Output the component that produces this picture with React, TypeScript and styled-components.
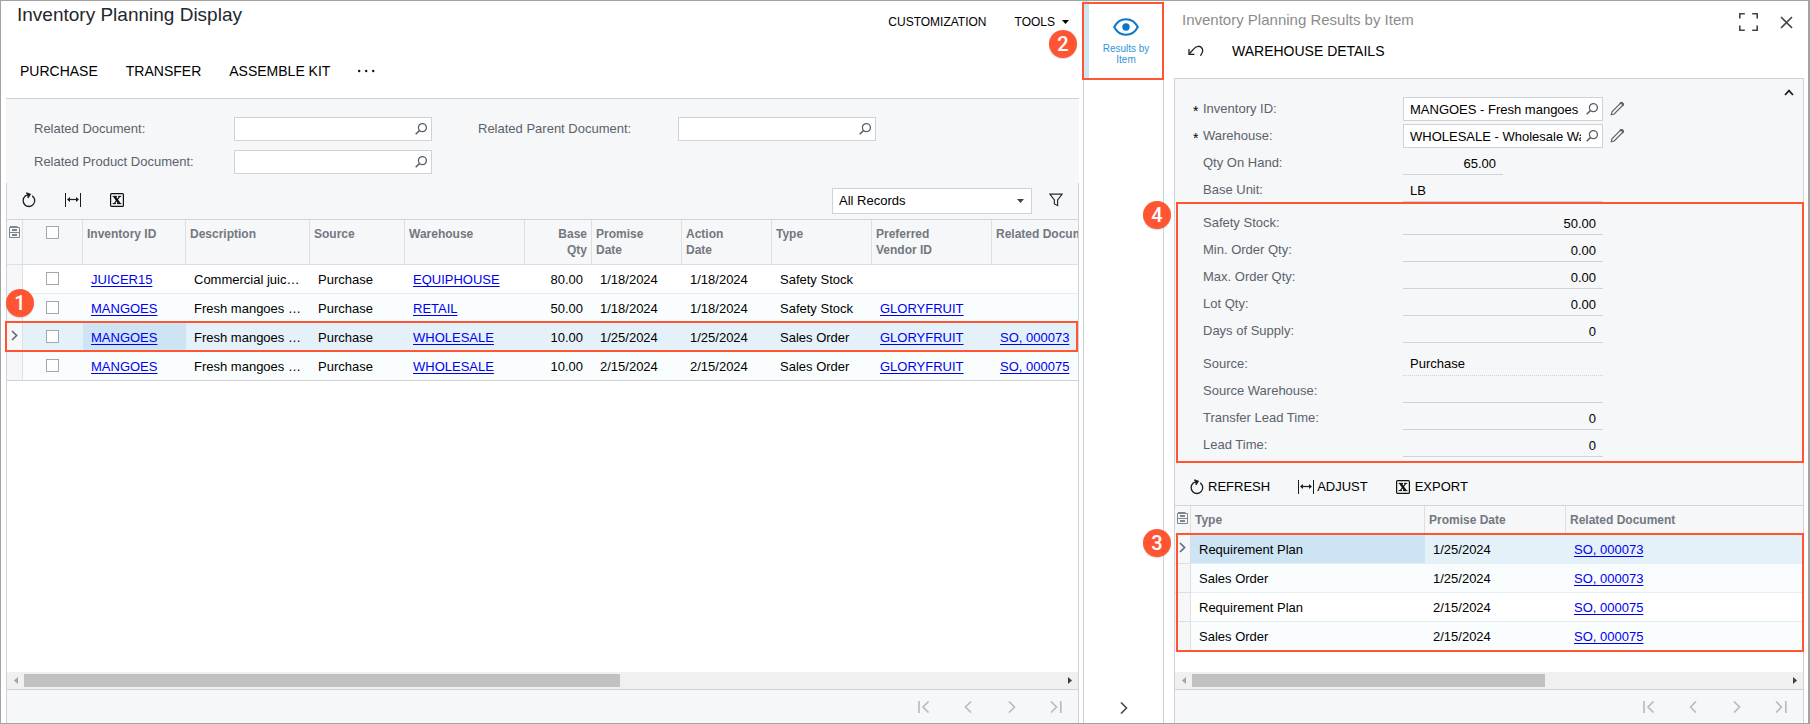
import React from "react";
import styled, { createGlobalStyle, css } from "styled-components";

const color = {
  line: "#cfd2d7",
  headLine: "#dddfe5",
  rowLine: "#e4eff2",
  panel: "#f5f7f9",
  alt: "#f9fdfd",
  selected: "#e4f1f9",
  active: "#cce4f4",
  label: "#5c626b",
  muted: "#8c8c8c",
  head: "#737880",
  link: "#0000ee",
  accent: "#ff5533",
  frame: "#a3a3a3",
  blue: "#0a78c9",
};

const GlobalStyle = createGlobalStyle`
  *, *::before, *::after { box-sizing: border-box; }
  body {
    margin: 0;
    background: #fff;
    color: #000;
    font-family: "Liberation Sans", Arial, sans-serif;
    font-size: 13px;
    line-height: 18px;
  }
  button, input, select { font: inherit; color: inherit; }
`;

/* ---------- shell ---------- */

const Frame = styled.div`
  display: grid;
  grid-template-columns: minmax(0, 1fr) 81px 644px;
  min-height: 100vh;
  border: 1px solid ${color.frame};
  border-right-width: 2px;
`;

const MainPane = styled.main`
  display: flex;
  flex-direction: column;
  min-width: 0;
  padding: 0 4px 0 5px;
`;

const SidePane = styled.section`
  display: flex;
  flex-direction: column;
  min-width: 0;
  padding: 0 4px 0 10px;
`;

const Rail = styled.aside`
  display: flex;
  flex-direction: column;
  justify-content: space-between;
  border: solid ${color.line};
  border-width: 0 1px;
`;

const PlainButton = styled.button`
  display: inline-flex;
  align-items: center;
  justify-content: center;
  padding: 0;
  border: 0;
  background: none;
  cursor: pointer;
  white-space: nowrap;
`;

const IconButton = styled(PlainButton)<{ $w?: number; $h?: number }>`
  flex: none;
  width: ${(p) => p.$w ?? 24}px;
  height: ${(p) => p.$h ?? 24}px;
`;

/* ---------- headings and menus ---------- */

const PageHead = styled.header`
  display: flex;
  justify-content: space-between;
  align-items: flex-start;
  height: 43px;
  padding: 3px 10px 0 11px;
`;

const PageTitle = styled.h1`
  margin: 0;
  font-size: 19px;
  font-weight: 400;
  line-height: 22px;
  color: #23272f;
`;

const PageTools = styled.div`
  display: flex;
  gap: 28px;
  padding-top: 10px;
  font-size: 12px;
  line-height: 16px;
`;

const ToolsButton = styled(PlainButton)`
  gap: 7px;
`;

const ActionBar = styled.nav`
  display: flex;
  align-items: center;
  gap: 28px;
  height: 54px;
  padding-left: 14px;
  font-size: 14px;
  line-height: 20px;
`;

const SideHead = styled.header`
  display: flex;
  align-items: center;
  height: 36px;
  padding: 2px 6px 0 8px;
`;

const SideTitle = styled.h2`
  flex: 1;
  margin: 0;
  font-size: 15px;
  font-weight: 400;
  line-height: 20px;
  color: ${color.muted};
`;

const SideTools = styled.div`
  display: flex;
  gap: 14px;
  padding-top: 4px;
`;

const SideActionBar = styled.nav`
  display: flex;
  align-items: center;
  gap: 24px;
  height: 28px;
  margin-bottom: 13px;
  padding-left: 10px;
  font-size: 14px;
`;

/* ---------- main filter form ---------- */

const FilterForm = styled.form`
  display: grid;
  grid-template-columns: 200px 198px;
  grid-auto-rows: 24px;
  row-gap: 9px;
  align-items: center;
  min-width: 0;
`;

const FilterArea = styled.div`
  display: flex;
  align-items: flex-start;
  gap: 46px;
  padding: 18px 28px 9px;
  border-top: 1px solid ${color.line};
  background: ${color.panel};
`;

const Label = styled.label`
  color: ${color.label};
  white-space: nowrap;
`;

const LookupBox = styled.span`
  display: flex;
  align-items: center;
  width: 100%;
  height: 24px;
  border: 1px solid ${color.line};
  background: #fff;
`;

const LookupInput = styled.input`
  flex: 1;
  min-width: 0;
  height: 22px;
  padding: 0;
  margin: 0 1px 0 6px;
  border: 0;
  outline: 0;
  background: none;
`;

/* ---------- grid ---------- */

const GridPanel = styled.section`
  display: flex;
  flex: 1;
  flex-direction: column;
  min-width: 0;
  border: solid ${color.line};
  border-width: 0 1px;
`;

const GridToolbar = styled.div`
  display: flex;
  align-items: flex-start;
  gap: 20px;
  height: 36px;
  padding: 5px 10px 0;
  background: ${color.panel};
`;

const Spacer = styled.span`
  flex: 1;
`;

const SelectWrap = styled.span`
  display: grid;
  align-items: center;
  width: 200px;
  & > * { grid-area: 1 / 1; }
  & > svg { justify-self: end; margin-right: 8px; pointer-events: none; }
`;

const RecordSelect = styled.select`
  appearance: none;
  width: 100%;
  height: 26px;
  padding: 0 6px;
  border: 1px solid ${color.line};
  border-radius: 0;
  background: #fff;
`;

const FilterSlot = styled.span`
  display: flex;
  margin-left: -8px;
`;

const TableArea = styled.div`
  flex: 1;
  min-width: 0;
  border-top: 1px solid ${color.line};
`;

const Table = styled.table`
  width: 100%;
  table-layout: fixed;
  border-collapse: separate;
  border-spacing: 0;
`;

const HeadCell = styled.th<{ $tall?: boolean; $right?: boolean; $center?: boolean; $last?: boolean }>`
  height: ${(p) => (p.$tall ? 45 : 29)}px;
  padding: ${(p) => (p.$center ? "6px 0 0" : "6px 4px 0")};
  border-right: ${(p) => (p.$last ? "0" : `1px solid ${color.headLine}`)};
  border-bottom: 1px solid ${color.headLine};
  background: ${color.panel};
  color: ${color.head};
  font-size: 12px;
  font-weight: 700;
  line-height: 16px;
  text-align: ${(p) => (p.$center ? "center" : p.$right ? "right" : "left")};
  vertical-align: top;
  overflow: hidden;
  ${(p) => p.$last && css`white-space: nowrap; padding-right: 0;`}
`;

const Row = styled.tr<{ $alt?: boolean; $selected?: boolean; $anchor?: boolean }>`
  background: ${(p) => (p.$selected ? color.selected : p.$alt ? color.alt : "#fff")};
  ${(p) => p.$anchor && css`position: relative;`}
`;

const Body = styled.tbody<{ $anchor?: boolean }>`
  ${(p) => p.$anchor && css`position: relative;`}
`;

const Cell = styled.td<{ $right?: boolean; $active?: boolean; $end?: boolean }>`
  height: 29px;
  padding: 2px ${(p) => (p.$right ? 9 : 8)}px 0 8px;
  border-bottom: 1px solid ${(p) => (p.$end ? color.line : color.rowLine)};
  background: ${(p) => (p.$active ? color.active : "transparent")};
  text-align: ${(p) => (p.$right ? "right" : "left")};
  white-space: nowrap;
  overflow: hidden;
  text-overflow: ellipsis;
`;

const MarkCell = styled.td<{ $end?: boolean }>`
  padding: 0;
  border-right: 1px solid ${color.headLine};
  border-bottom: 1px solid ${(p) => (p.$end ? color.line : color.headLine)};
  background: ${color.panel};
  text-align: center;
  & > svg { display: block; margin: 0 auto 4px; }
`;

const CheckCell = styled.td<{ $end?: boolean }>`
  padding: 0 2px 2px 0;
  border-bottom: 1px solid ${(p) => (p.$end ? color.line : color.rowLine)};
`;

const Check = styled.input`
  appearance: none;
  display: block;
  width: 13px;
  height: 13px;
  margin: 0 auto;
  border: 1px solid #a3a7ae;
  background: #fff;
`;

const Link = styled.a`
  color: ${color.link};
  text-decoration: underline;
  text-underline-offset: 2px;
`;

/* ---------- scroll bar and pager ---------- */

const ScrollBar = styled.div`
  display: flex;
  height: 17px;
  background: #f0f0f0;
`;

const Track = styled.div`
  flex: 1;
  padding: 2px 0;
`;

const Thumb = styled.div<{ $share: number }>`
  width: ${(p) => p.$share}%;
  height: 13px;
  background: #c1c1c1;
`;

const Pager = styled.footer`
  display: flex;
  justify-content: flex-end;
  height: 34px;
  border-top: 1px solid ${color.line};
  background: ${color.panel};
  padding-top: 1px;
`;

/* ---------- rail ---------- */

const RailItem = styled.div`
  position: relative;
  height: 78px;
  border-left: 5px solid #cce6f4;
`;

const RailButton = styled.button`
  display: flex;
  flex-direction: column;
  align-items: center;
  gap: 7px;
  width: 100%;
  height: 78px;
  padding: 17px 12px 0;
  border: 0;
  background: none;
  color: #3494d6;
  font-size: 10px;
  line-height: 11px;
  cursor: pointer;
  & > svg { flex: none; }
`;

const RailFoot = styled.div`
  display: flex;
  justify-content: center;
  padding: 0 0 3px;
`;

/* ---------- detail form ---------- */

const Details = styled.form`
  border: 1px solid ${color.line};
  border-bottom: 0;
  background: ${color.panel};
`;

const SummaryRow = styled.div`
  display: flex;
  align-items: flex-start;
`;

const FieldGroup = styled.div<{ $first?: boolean }>`
  display: grid;
  flex: 1;
  gap: 3px;
  padding: ${(p) => (p.$first ? "18px 0 0" : "9px 0 0")};
`;

const FieldRow = styled.div`
  display: grid;
  grid-template-columns: 10px 200px 200px 30px;
  align-items: center;
  height: 24px;
  padding-left: 18px;
`;

const Star = styled.span`
  margin-top: 4px;
  font-size: 14px;
  line-height: 14px;
`;

const ReadOnly = styled.input<{ $short?: boolean; $right?: boolean }>`
  width: ${(p) => (p.$short ? 100 : 200)}px;
  height: 24px;
  padding: 1px 7px 0;
  border: 0;
  border-bottom: 1px solid ${color.line};
  outline: 0;
  background: none;
  text-align: ${(p) => (p.$right ? "right" : "left")};
`;

const ReadOnlySelect = styled.select`
  appearance: none;
  width: 200px;
  height: 24px;
  padding: 0 7px;
  border: 0;
  border-bottom: 1px dotted ${color.line};
  border-radius: 0;
  background: none;
  color: #000;
  opacity: 1;
`;

const Highlighted = styled.div`
  position: relative;
  padding-bottom: 6px;
`;

const DetailToolbar = styled.div`
  display: flex;
  align-items: center;
  gap: 28px;
  height: 42px;
  padding: 5px 15px 0;
  background: ${color.panel};
`;

const ToolButton = styled(PlainButton)<{ $gap: number }>`
  gap: ${(p) => p.$gap}px;
`;

/* ---------- annotations ---------- */

const Callout = styled.span<{ $inset: string }>`
  position: absolute;
  inset: ${(p) => p.$inset};
  border: 2px solid ${color.accent};
  pointer-events: none;
  z-index: 1;
`;

const Badge = styled.span<{ $left: number; $top: number }>`
  position: absolute;
  left: ${(p) => p.$left}px;
  top: ${(p) => p.$top}px;
  z-index: 2;
  display: flex;
  align-items: center;
  justify-content: center;
  width: 28px;
  height: 28px;
  border-radius: 50%;
  background: ${color.accent};
  box-shadow: 0 1px 1px rgba(0, 0, 0, 0.15);
  color: #fff;
  font-family: Roboto, "Liberation Sans", sans-serif;
  font-size: 20px;
  font-weight: 500;
  line-height: 28px;
`;

/* ---------- icons ---------- */

const SearchIcon = () => (
  <svg width="12" height="12" viewBox="0 0 12 12" fill="none" stroke="#5b5f66" strokeWidth="1.3">
    <circle cx="7.4" cy="4.6" r="4" />
    <path d="M4.5 7.5 .7 11.3" strokeWidth="1.6" />
  </svg>
);

const RefreshIcon = () => (
  <svg width="14" height="16" viewBox="0 0 14 16" fill="none" stroke="#1d1d1d" strokeWidth="1.3">
    <path d="M10.2 3.9A5.8 5.8 0 1 1 3.4 4.1" />
    <path d="M2.9 4.3Q4.6 3 6.6 2.9" />
    <path d="M4.2.8 8.2 2.4 5.9 6" />
    <path d="M4.8 1.2 7.8 2.4 6 5.2Z" fill="#1d1d1d" strokeWidth=".5" />
  </svg>
);

const AdjustIcon = () => (
  <svg width="16" height="14" viewBox="0 0 16 14" fill="none" stroke="#1d1d1d">
    <path d="M.5 0V14M15.5 0V14" strokeWidth="1" />
    <path d="M3 6.5H13" strokeWidth="1.2" />
    <path d="M2 6.5 5 4V9ZM14 6.5 11 4V9Z" fill="#1d1d1d" stroke="none" />
  </svg>
);

const ExcelIcon = () => (
  <svg width="14" height="14" viewBox="0 0 14 14" fill="none" stroke="#111">
    <rect x=".6" y=".6" width="12.8" height="12.8" rx="1" strokeWidth="1.2" />
    <path d="M4.4 3.4 9.4 10.6" strokeWidth="2.5" />
    <path d="M9.8 3.4 4.2 10.6" strokeWidth="1.1" />
    <path d="M2.6 3.4H7M8 3.4H11.2M2.6 10.6H6M7 10.6H11.4" strokeWidth="1" />
  </svg>
);

const FunnelIcon = () => (
  <svg width="14" height="14" viewBox="0 0 14 14" fill="none" stroke="#2a2d33" strokeWidth="1.2">
    <path d="M.9 1.1H13.1L8.6 6.9V12.6L5.4 11V6.9Z" />
  </svg>
);

const CaretDown = ({ fill = "#000" }: { fill?: string }) => (
  <svg width="7" height="4" viewBox="0 0 7 4">
    <path d="M0 0H7L3.5 4Z" fill={fill} />
  </svg>
);

const DotsIcon = () => (
  <svg width="17" height="4" viewBox="0 0 17 4" fill="#111">
    <circle cx="1.2" cy="2" r="1.2" />
    <circle cx="8.2" cy="2" r="1.2" />
    <circle cx="15.2" cy="2" r="1.2" />
  </svg>
);

const FilesIcon = () => (
  <svg width="11" height="12" viewBox="0 0 11 12" fill="none" stroke="#80858d">
    <path d="M1 .5H8.5" strokeWidth="1" />
    <path d="M.5 1.5H10.5V11.5H.5ZM.5 6.5H10.5" strokeWidth="1" />
    <path d="M3 4H8M3 9H8" strokeWidth="2" />
  </svg>
);

const RowMarkIcon = () => (
  <svg width="7" height="11" viewBox="0 0 7 11" fill="none" stroke="#626770" strokeWidth="1.6">
    <path d="M1 1 5.6 5.5 1 10" />
  </svg>
);

const EyeIcon = () => (
  <svg width="26" height="18" viewBox="0 0 26 18" fill="none" stroke={color.blue} strokeWidth="2">
    <path d="M1.2 9C4 3.6 8.2 1.2 13 1.2S22 3.6 24.8 9C22 14.4 17.8 16.8 13 16.8S4 14.4 1.2 9Z" />
    <circle cx="13" cy="9" r="3.7" fill={color.blue} stroke="none" />
  </svg>
);

const UndoIcon = () => (
  <svg width="16" height="12" viewBox="0 0 16 12" fill="none" stroke="#1d1d1d" strokeWidth="1.3">
    <path d="M1.4 8.8 6 3.6C8.4.6 12.6.4 14.2 3.6 15.2 6 14.4 8.6 12.4 10.8" />
    <path d="M1 4V9.3H6.4" />
  </svg>
);

const ExpandIcon = () => (
  <svg width="19" height="18" viewBox="0 0 19 18" fill="none" stroke="#444" strokeWidth="1.6">
    <path d="M.8 5.4V.8H5.8M13.2.8H18.2V5.4M18.2 12.6V17.2H13.2M5.8 17.2H.8V12.6" />
  </svg>
);

const CloseIcon = () => (
  <svg width="13" height="13" viewBox="0 0 13 13" fill="none" stroke="#444" strokeWidth="1.7">
    <path d="M1 1 12 12M12 1 1 12" />
  </svg>
);

const CollapseIcon = () => (
  <svg width="10" height="7" viewBox="0 0 10 7" fill="none" stroke="#222" strokeWidth="1.8">
    <path d="M1 6 5 1.6 9 6" />
  </svg>
);

const PencilIcon = () => (
  <svg width="14" height="14" viewBox="0 0 14 14" fill="none" stroke="#5c6067">
    <path d="M1.2 12.8 2 9.8 9.8 1.8Q11-.2 12.6 1.2T12 4L4.2 12Z" strokeWidth="1.1" />
    <path d="M10 1.8Q11.2.4 12.4 1.4T12.2 3.8" strokeWidth="2" />
  </svg>
);

const PageIcon = ({ kind, stroke = "#b9bcc1" }: { kind: "first" | "prev" | "next" | "last"; stroke?: string }) => {
  const shapes = {
    first: "M1 0V12M10.5 .5 5 6 10.5 11.5",
    prev: "M9 .5 3.5 6 9 11.5",
    next: "M3 .5 8.5 6 3 11.5",
    last: "M1 .5 6.5 6 1 11.5M10.8 0V12",
  };
  return (
    <svg width="12" height="12" viewBox="0 0 12 12" fill="none" stroke={stroke} strokeWidth="1.7">
      <path d={shapes[kind]} />
    </svg>
  );
};

const ScrollArrow = ({ dir }: { dir: "left" | "right" }) => (
  <svg width="4" height="7" viewBox="0 0 4 7">
    <path d={dir === "left" ? "M4 0V7L0 3.5Z" : "M0 0V7L4 3.5Z"} fill={dir === "left" ? "#a3a3a3" : "#404040"} />
  </svg>
);

/* ---------- composed parts ---------- */

const Lookup = ({ id, value }: { id: string; value?: string }) => (
  <LookupBox>
    <LookupInput id={id} type="text" defaultValue={value} />
    <IconButton type="button" aria-label="Select" $w={20} $h={22}>
      <SearchIcon />
    </IconButton>
  </LookupBox>
);

const HScroll = ({ share }: { share: number }) => (
  <ScrollBar>
    <IconButton type="button" aria-label="Scroll left" $w={17} $h={17}>
      <ScrollArrow dir="left" />
    </IconButton>
    <Track>
      <Thumb $share={share} />
    </Track>
    <IconButton type="button" aria-label="Scroll right" $w={17} $h={17}>
      <ScrollArrow dir="right" />
    </IconButton>
  </ScrollBar>
);

const PagerBar = () => (
  <Pager>
    {(["first", "prev", "next", "last"] as const).map((kind) => (
      <IconButton key={kind} type="button" aria-label={`${kind} page`} $w={44} $h={32}>
        <PageIcon kind={kind} />
      </IconButton>
    ))}
  </Pager>
);

interface FieldProps {
  id: string;
  label: string;
  required?: boolean;
  children: React.ReactNode;
  edit?: boolean;
}

const Field = ({ id, label, required, children, edit }: FieldProps) => (
  <FieldRow>
    {required ? <Star>*</Star> : <span />}
    <Label htmlFor={id}>{label}</Label>
    {children}
    {edit && (
      <IconButton type="button" aria-label={`Edit ${label}`} $w={28}>
        <PencilIcon />
      </IconButton>
    )}
  </FieldRow>
);

interface PlanRow {
  item: string;
  descr: string;
  warehouse: string;
  qty: string;
  date: string;
  type: string;
  vendor?: string;
  doc?: string;
}

const planRows: PlanRow[] = [
  { item: "JUICER15", descr: "Commercial juicer 15", warehouse: "EQUIPHOUSE", qty: "80.00", date: "1/18/2024", type: "Safety Stock" },
  { item: "MANGOES", descr: "Fresh mangoes 1 lb", warehouse: "RETAIL", qty: "50.00", date: "1/18/2024", type: "Safety Stock", vendor: "GLORYFRUIT" },
  { item: "MANGOES", descr: "Fresh mangoes 1 lb", warehouse: "WHOLESALE", qty: "10.00", date: "1/25/2024", type: "Sales Order", vendor: "GLORYFRUIT", doc: "SO, 000073" },
  { item: "MANGOES", descr: "Fresh mangoes 1 lb", warehouse: "WHOLESALE", qty: "10.00", date: "2/15/2024", type: "Sales Order", vendor: "GLORYFRUIT", doc: "SO, 000075" },
];

const resultRows = [
  { type: "Requirement Plan", date: "1/25/2024", doc: "SO, 000073" },
  { type: "Sales Order", date: "1/25/2024", doc: "SO, 000073" },
  { type: "Requirement Plan", date: "2/15/2024", doc: "SO, 000075" },
  { type: "Sales Order", date: "2/15/2024", doc: "SO, 000075" },
];

const planWidths = [16, 60, 103, 124, 95, 120, 67, 90, 90, 100, 120];

const PlanTable = () => (
  <Table>
    <colgroup>
      {planWidths.map((w, i) => (
        <col key={i} width={w} />
      ))}
      <col />
    </colgroup>
    <thead>
      <tr>
        <HeadCell $tall $center><FilesIcon /></HeadCell>
        <HeadCell $tall $center><Check type="checkbox" aria-label="Select all rows" /></HeadCell>
        <HeadCell $tall>Inventory ID</HeadCell>
        <HeadCell $tall>Description</HeadCell>
        <HeadCell $tall>Source</HeadCell>
        <HeadCell $tall>Warehouse</HeadCell>
        <HeadCell $tall $right>Base<br />Qty</HeadCell>
        <HeadCell $tall>Promise<br />Date</HeadCell>
        <HeadCell $tall>Action<br />Date</HeadCell>
        <HeadCell $tall>Type</HeadCell>
        <HeadCell $tall>Preferred<br />Vendor ID</HeadCell>
        <HeadCell $tall $last>Related Document</HeadCell>
      </tr>
    </thead>
    <Body>
      {planRows.map((r, i) => {
        const end = i === planRows.length - 1;
        const selected = i === 2;
        return (
          <Row key={i} $alt={i > 0} $selected={selected} $anchor={selected}>
            <MarkCell $end={end}>
              {selected && (
                <>
                  <RowMarkIcon />
                  <Callout $inset="-2px 0 0 -2px" />
                  <Badge $left={-1} $top={-34}>1</Badge>
                </>
              )}
            </MarkCell>
            <CheckCell $end={end}><Check type="checkbox" aria-label={`Select row ${i + 1}`} /></CheckCell>
            <Cell $end={end} $active={selected}><Link href="#item">{r.item}</Link></Cell>
            <Cell $end={end}>{r.descr}</Cell>
            <Cell $end={end}>Purchase</Cell>
            <Cell $end={end}><Link href="#warehouse">{r.warehouse}</Link></Cell>
            <Cell $end={end} $right>{r.qty}</Cell>
            <Cell $end={end}>{r.date}</Cell>
            <Cell $end={end}>{r.date}</Cell>
            <Cell $end={end}>{r.type}</Cell>
            <Cell $end={end}>{r.vendor && <Link href="#vendor">{r.vendor}</Link>}</Cell>
            <Cell $end={end}>{r.doc && <Link href="#document">{r.doc}</Link>}</Cell>
          </Row>
        );
      })}
    </Body>
  </Table>
);

const ResultTable = () => (
  <Table>
    <colgroup>
      <col width={16} />
      <col width={234} />
      <col width={141} />
      <col />
    </colgroup>
    <thead>
      <tr>
        <HeadCell $center><FilesIcon /></HeadCell>
        <HeadCell>Type</HeadCell>
        <HeadCell>Promise Date</HeadCell>
        <HeadCell $last>Related Document</HeadCell>
      </tr>
    </thead>
    <Body $anchor>
      {resultRows.map((r, i) => (
        <Row key={i} $alt={i % 2 === 1} $selected={i === 0}>
          <MarkCell>
            {i === 0 && (
              <>
                <RowMarkIcon />
                <Callout $inset="-2px -1px -1px 1px" />
                <Badge $left={-32} $top={-6}>3</Badge>
              </>
            )}
          </MarkCell>
          <Cell $active={i === 0}>{r.type}</Cell>
          <Cell>{r.date}</Cell>
          <Cell><Link href="#document">{r.doc}</Link></Cell>
        </Row>
      ))}
    </Body>
  </Table>
);

const supplyFields = [
  ["safety", "Safety Stock:", "50.00"],
  ["min", "Min. Order Qty:", "0.00"],
  ["max", "Max. Order Qty:", "0.00"],
  ["lot", "Lot Qty:", "0.00"],
  ["days", "Days of Supply:", "0"],
];

const sourceFields = [
  ["srcwh", "Source Warehouse:", ""],
  ["transfer", "Transfer Lead Time:", "0"],
  ["lead", "Lead Time:", "0"],
];

export default function App() {
  return (
    <>
      <GlobalStyle />
      <Frame>
        <MainPane>
          <PageHead>
            <PageTitle>Inventory Planning Display</PageTitle>
            <PageTools>
              <PlainButton type="button">CUSTOMIZATION</PlainButton>
              <ToolsButton type="button">TOOLS <CaretDown /></ToolsButton>
            </PageTools>
          </PageHead>
          <ActionBar>
            <PlainButton type="button">PURCHASE</PlainButton>
            <PlainButton type="button">TRANSFER</PlainButton>
            <PlainButton type="button">ASSEMBLE KIT</PlainButton>
            <PlainButton type="button" aria-label="More actions"><DotsIcon /></PlainButton>
          </ActionBar>
          <FilterArea>
            <FilterForm>
              <Label htmlFor="doc">Related Document:</Label>
              <Lookup id="doc" />
              <Label htmlFor="product">Related Product Document:</Label>
              <Lookup id="product" />
            </FilterForm>
            <FilterForm>
              <Label htmlFor="parent">Related Parent Document:</Label>
              <Lookup id="parent" />
            </FilterForm>
          </FilterArea>
          <GridPanel>
            <GridToolbar>
              <IconButton type="button" aria-label="Refresh"><RefreshIcon /></IconButton>
              <IconButton type="button" aria-label="Fit columns"><AdjustIcon /></IconButton>
              <IconButton type="button" aria-label="Export to Excel"><ExcelIcon /></IconButton>
              <Spacer />
              <SelectWrap>
                <RecordSelect aria-label="Filter" defaultValue="all">
                  <option value="all">All Records</option>
                </RecordSelect>
                <CaretDown fill="#444" />
              </SelectWrap>
              <FilterSlot>
                <IconButton type="button" aria-label="Filter settings"><FunnelIcon /></IconButton>
              </FilterSlot>
            </GridToolbar>
            <TableArea>
              <PlanTable />
            </TableArea>
            <HScroll share={57.5} />
            <PagerBar />
          </GridPanel>
        </MainPane>

        <Rail>
          <RailItem>
            <RailButton type="button">
              <EyeIcon />
              <span>Results by Item</span>
            </RailButton>
            <Callout $inset="1px -1px -1px -7px" />
            <Badge $left={-40} $top={29}>2</Badge>
          </RailItem>
          <RailFoot>
            <IconButton type="button" aria-label="Collapse panel"><PageIcon kind="next" stroke="#4d5158" /></IconButton>
          </RailFoot>
        </Rail>

        <SidePane>
          <SideHead>
            <SideTitle>Inventory Planning Results by Item</SideTitle>
            <SideTools>
              <IconButton type="button" aria-label="Full screen"><ExpandIcon /></IconButton>
              <IconButton type="button" aria-label="Close"><CloseIcon /></IconButton>
            </SideTools>
          </SideHead>
          <SideActionBar>
            <IconButton type="button" aria-label="Undo"><UndoIcon /></IconButton>
            <PlainButton type="button">WAREHOUSE DETAILS</PlainButton>
          </SideActionBar>
          <Details>
            <SummaryRow>
              <FieldGroup $first>
                <Field id="inv" label="Inventory ID:" required edit>
                  <Lookup id="inv" value="MANGOES - Fresh mangoes" />
                </Field>
                <Field id="wh" label="Warehouse:" required edit>
                  <Lookup id="wh" value="WHOLESALE - Wholesale Warehouse" />
                </Field>
                <Field id="onhand" label="Qty On Hand:">
                  <ReadOnly id="onhand" readOnly value="65.00" $short $right />
                </Field>
                <Field id="unit" label="Base Unit:">
                  <ReadOnly id="unit" readOnly value="LB" />
                </Field>
              </FieldGroup>
              <IconButton type="button" aria-label="Collapse summary" $w={28} $h={26}><CollapseIcon /></IconButton>
            </SummaryRow>
            <Highlighted>
              <FieldGroup>
                {supplyFields.map(([id, label, value]) => (
                  <Field key={id} id={id} label={label}>
                    <ReadOnly id={id} readOnly value={value} $right />
                  </Field>
                ))}
              </FieldGroup>
              <FieldGroup>
                <Field id="source" label="Source:">
                  <ReadOnlySelect id="source" disabled defaultValue="p">
                    <option value="p">Purchase</option>
                  </ReadOnlySelect>
                </Field>
                {sourceFields.map(([id, label, value]) => (
                  <Field key={id} id={id} label={label}>
                    <ReadOnly id={id} readOnly value={value} $right />
                  </Field>
                ))}
              </FieldGroup>
              <Callout $inset="0 -1px 0 1px" />
              <Badge $left={-32} $top={-1}>4</Badge>
            </Highlighted>
          </Details>
          <GridPanel>
            <DetailToolbar>
              <ToolButton type="button" $gap={4}><RefreshIcon />REFRESH</ToolButton>
              <ToolButton type="button" $gap={3}><AdjustIcon />ADJUST</ToolButton>
              <ToolButton type="button" $gap={5}><ExcelIcon />EXPORT</ToolButton>
            </DetailToolbar>
            <TableArea>
              <ResultTable />
            </TableArea>
            <HScroll share={59.4} />
            <PagerBar />
          </GridPanel>
        </SidePane>
      </Frame>
    </>
  );
}
